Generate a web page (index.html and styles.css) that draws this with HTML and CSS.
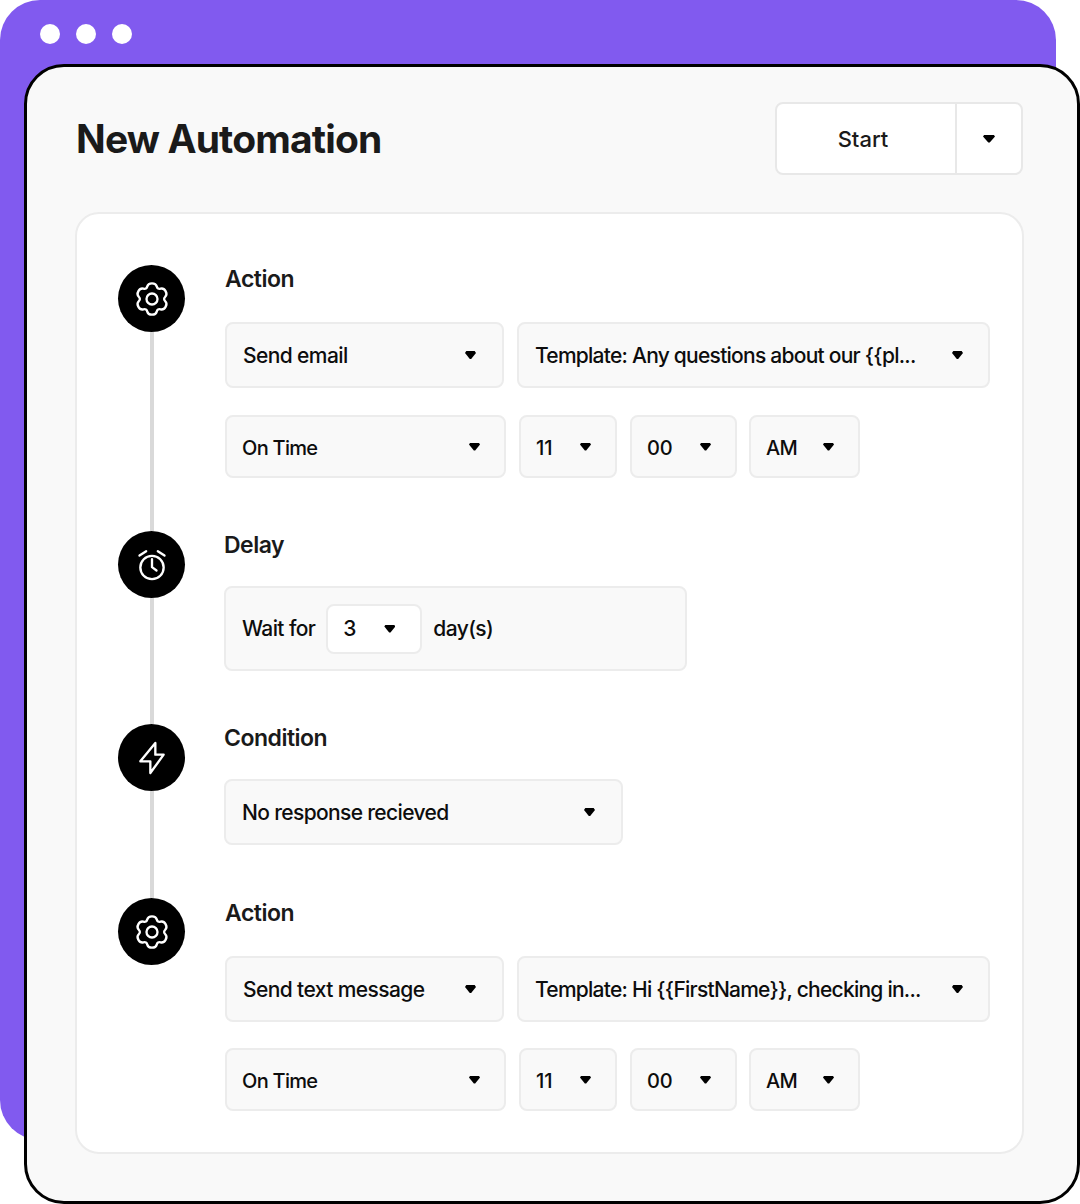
FILE: index.html
```html
<!DOCTYPE html>
<html lang="en">

<head>
 <meta charset="UTF-8">
 <title>New Automation</title>
 <link rel="stylesheet" href="styles.css">
</head>

<body>
 <div class="stage">
  <div class="backdrop">
   <span class="dot"></span>
   <span class="dot"></span>
   <span class="dot"></span>
  </div>

  <main class="window">
   <header class="top">
    <h1>New Automation</h1>
    <div class="start">
     <span class="start-label">Start</span>
     <span class="start-arrow"><i class="caret caret-big"></i></span>
    </div>
   </header>

   <section class="card">

    <div class="step step-action">
     <div class="rail">
      <span class="bubble">
       <svg viewBox="0 0 24 24" class="icon"><path d="M12 2.59Q14.35 2.59 14.83 4.44Q15.3 6.28 17.14 5.77Q18.98 5.26 20.15 7.3Q21.32 9.33 19.96 10.67Q18.6 12 19.96 13.33Q21.32 14.67 20.15 16.7Q18.98 18.74 17.14 18.23Q15.3 17.72 14.83 19.56Q14.35 21.41 12 21.41Q9.65 21.41 9.17 19.56Q8.7 17.72 6.86 18.23Q5.02 18.74 3.85 16.7Q2.68 14.67 4.04 13.33Q5.4 12 4.04 10.67Q2.68 9.33 3.85 7.3Q5.02 5.26 6.86 5.77Q8.7 6.28 9.17 4.44Q9.65 2.59 12 2.59Z"/><circle cx="12" cy="12" r="3.3"/></svg>
      </span>
      <span class="line"></span>
     </div>
     <div class="body">
      <h2>Action</h2>
      <div class="row row-tall">
       <div class="select w-kind"><span>Send email</span><i class="caret"></i></div>
       <div class="select w-template"><span>Template: Any questions about our {{pl...</span><i class="caret"></i></div>
      </div>
      <div class="row row-short">
       <div class="select w-when"><span>On Time</span><i class="caret"></i></div>
       <div class="select w-hour"><span>11</span><i class="caret"></i></div>
       <div class="select w-min"><span>00</span><i class="caret"></i></div>
       <div class="select w-ampm"><span>AM</span><i class="caret"></i></div>
      </div>
     </div>
    </div>

    <div class="step step-delay">
     <div class="rail">
      <span class="bubble">
       <svg viewBox="0 0 24 24" class="icon"><circle cx="12" cy="13.5" r="7"/><path d="M12 8.5v4.8l2.7 2"/><path d="M4.5 6.3 8.5 3.7"/><path d="M19.5 6.3 15.5 3.7"/></svg>
      </span>
      <span class="line"></span>
     </div>
     <div class="body">
      <h2>Delay</h2>
      <div class="wait">
       <span>Wait for</span>
       <div class="select select-white"><span>3</span><i class="caret"></i></div>
       <span>day(s)</span>
      </div>
     </div>
    </div>

    <div class="step step-condition">
     <div class="rail">
      <span class="bubble">
       <svg viewBox="0 0 24 24" class="icon"><path d="M14 3v7h5l-8 11v-7H5z"/></svg>
      </span>
      <span class="line"></span>
     </div>
     <div class="body">
      <h2>Condition</h2>
      <div class="select w-response"><span>No response recieved</span><i class="caret"></i></div>
     </div>
    </div>

    <div class="step step-action step-last">
     <div class="rail">
      <span class="bubble">
       <svg viewBox="0 0 24 24" class="icon"><path d="M12 2.59Q14.35 2.59 14.83 4.44Q15.3 6.28 17.14 5.77Q18.98 5.26 20.15 7.3Q21.32 9.33 19.96 10.67Q18.6 12 19.96 13.33Q21.32 14.67 20.15 16.7Q18.98 18.74 17.14 18.23Q15.3 17.72 14.83 19.56Q14.35 21.41 12 21.41Q9.65 21.41 9.17 19.56Q8.7 17.72 6.86 18.23Q5.02 18.74 3.85 16.7Q2.68 14.67 4.04 13.33Q5.4 12 4.04 10.67Q2.68 9.33 3.85 7.3Q5.02 5.26 6.86 5.77Q8.7 6.28 9.17 4.44Q9.65 2.59 12 2.59Z"/><circle cx="12" cy="12" r="3.3"/></svg>
      </span>
     </div>
     <div class="body">
      <h2>Action</h2>
      <div class="row row-tall">
       <div class="select w-kind"><span>Send text message</span><i class="caret"></i></div>
       <div class="select w-template"><span>Template: Hi {{FirstName}}, checking in...</span><i class="caret"></i></div>
      </div>
      <div class="row row-short">
       <div class="select w-when"><span>On Time</span><i class="caret"></i></div>
       <div class="select w-hour"><span>11</span><i class="caret"></i></div>
       <div class="select w-min"><span>00</span><i class="caret"></i></div>
       <div class="select w-ampm"><span>AM</span><i class="caret"></i></div>
      </div>
     </div>
    </div>

   </section>
  </main>
 </div>
</body>

</html>
```

FILE: styles.css
```css
*,
*::before,
*::after {
 box-sizing: border-box;
}

body {
 margin: 0;
 background: #fff;
 font-family: Inter, "Noto Sans", sans-serif;
 color: #1a1a1a;
}

.stage {
 position: relative;
 width: 1080px;
 height: 1204px;
 overflow: hidden;
}

.backdrop {
 position: absolute;
 top: 0;
 left: 0;
 width: 1056px;
 height: 1140px;
 display: flex;
 gap: 16px;
 padding: 24px 40px;
 background: #815aef;
 border-radius: 40px;
}

.dot {
 width: 20px;
 height: 20px;
 border-radius: 50%;
 background: #fff;
}

.window {
 position: absolute;
 top: 64px;
 left: 24px;
 width: 1056px;
 height: 1140px;
 padding: 35px 53px 0 48px;
 background: #f9f9f9;
 border: 3px solid #000;
 border-radius: 40px;
}

.top {
 display: flex;
 justify-content: space-between;
 align-items: center;
 height: 74px;
}

h1 {
 margin: 0 0 2px 1px;
 font-size: 39px;
 font-weight: 700;
 letter-spacing: -.85px;
}

.start {
 display: flex;
 align-self: flex-start;
 width: 248px;
 height: 73px;
 margin-right: 1px;
 background: #fff;
 border: 2px solid #e8e8e8;
 border-radius: 8px;
}

.start-label {
 flex: 1;
 display: flex;
 align-items: center;
 justify-content: center;
 padding-right: 6px;
 font-size: 22px;
 font-weight: 500;
}

.start-arrow {
 width: 66px;
 display: flex;
 align-items: center;
 justify-content: center;
 border-left: 2px solid #e8e8e8;
}

.card {
 width: 949px;
 height: 942px;
 margin-top: 36px;
 padding: 51px 32px 0 41px;
 background: #fff;
 border: 2px solid #ececec;
 border-radius: 24px;
}

.step {
 display: flex;
}

.rail {
 width: 67px;
 flex: none;
 display: flex;
 flex-direction: column;
 align-items: center;
}

.bubble {
 width: 67px;
 height: 67px;
 flex: none;
 display: flex;
 align-items: center;
 justify-content: center;
 background: #000;
 border-radius: 50%;
}

.icon {
 width: 40px;
 height: 40px;
 fill: none;
 stroke: #fff;
 stroke-width: 1.4;
 stroke-linecap: round;
 stroke-linejoin: round;
}

.line {
 flex: 1;
 width: 4px;
 background: #d9d9d9;
}

.body {
 flex: 1;
 padding-left: 39px;
}

.step-action .body {
 padding-left: 40px;
 padding-bottom: 53px;
}

.step-delay .body {
 padding-bottom: 53px;
}

.step-condition .body {
 padding-bottom: 53px;
}

.step-last .body {
 padding-top: 1px;
 padding-bottom: 0;
}

h2 {
 margin: 0;
 height: 28px;
 font-size: 23px;
 line-height: 28px;
 font-weight: 600;
 letter-spacing: -.5px;
}

.step-action h2 {
 margin-bottom: 29px;
}

.step-delay h2 {
 margin-bottom: 27px;
}

.step-condition h2 {
 margin-bottom: 27px;
}

.row {
 display: flex;
}

.row-tall {
 gap: 13px;
 height: 66px;
 margin-bottom: 27px;
}

.step-last .row-tall {
 margin-bottom: 26px;
}

.row-short {
 gap: 13px;
 height: 63px;
}

.select {
 display: flex;
 align-items: center;
 justify-content: space-between;
 height: 100%;
 padding: 0 24px 0 16px;
 font-size: 21px;
 font-weight: 500;
 letter-spacing: -.65px;
 color: #0d0d0d;
 white-space: nowrap;
 background: #f9f9f9;
 border: 2px solid #ececec;
 border-radius: 8px;
}

.row-short .select {
 padding-left: 15px;
 font-size: 20px;
 letter-spacing: -.7px;
}

.row-short .select span {
 padding-top: 2px;
}

.row-short .w-hour,
.row-short .w-min {
 letter-spacing: -.1px;
}

.w-kind {
 width: 279px;
 padding-right: 26px;
 letter-spacing: -.6px;
}

.w-template {
 width: 473px;
 padding-right: 25px;
 letter-spacing: -.75px;
}

.w-when {
 width: 281px;
}

.w-hour {
 width: 98px;
}

.w-min {
 width: 107px;
}

.w-ampm {
 width: 111px;
 margin-left: -1px;
}

.w-response {
 width: 399px;
 height: 66px;
 padding-right: 26px;
}

.wait {
 display: flex;
 align-items: center;
 gap: 11px;
 width: 463px;
 height: 85px;
 padding: 0 16px;
 font-size: 21px;
 font-weight: 500;
 letter-spacing: -.6px;
 color: #0d0d0d;
 background: #f9f9f9;
 border: 2px solid #ececec;
 border-radius: 8px;
}

.wait .select-white {
 flex: none;
 width: 96px;
 height: 50px;
 padding-left: 15px;
 padding-right: 25px;
 background: #fff;
}

.caret {
 width: 11px;
 height: 8px;
 flex: none;
 background: #000;
 clip-path: polygon(12% 0, 88% 0, 100% 25%, 56% 100%, 44% 100%, 0 25%);
}

.caret-big {
 width: 12px;
}
```
